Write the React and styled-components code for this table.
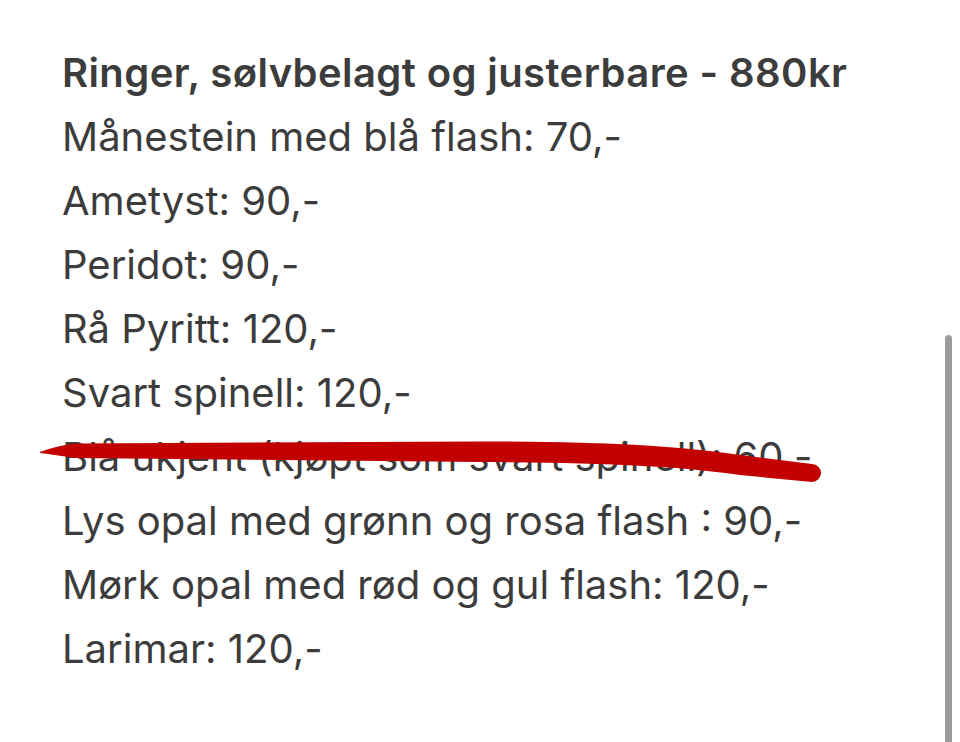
import React from 'react'
import styled, { createGlobalStyle } from 'styled-components'

const textColor = "#3c3c3c"
const strikeRed = "#c30000"

const Global = createGlobalStyle`
    html, body {
        margin: 0;
        padding: 0;
        background: #ffffff;
    }
    body {
        font-family: Inter, "Noto Sans", "Liberation Sans", sans-serif;
    }
`

const Page = styled.main`
    position: relative;
    width: 960px;
    height: 742px;
    overflow: hidden;
    background: #ffffff;
    padding: 41px 0 0 62px;
    box-sizing: border-box;
`

const List = styled.div`
    display: flex;
    flex-direction: column;
`

const Line = styled.div`
    position: relative;
    height: 64px;
    line-height: 64px;
    font-size: 40px;
    font-weight: ${p => (p.$bold ? 600 : 400)};
    color: ${textColor};
    letter-spacing: ${p => (p.$bold ? "0.4px" : "0px")};
    white-space: nowrap;
`

const Strike = styled.svg`
    position: absolute;
    left: -62px;
    top: 0;
    width: 960px;
    height: 64px;
    pointer-events: none;
`

const ScrollThumb = styled.div`
    position: absolute;
    right: 8px;
    top: 335px;
    bottom: -10px;
    width: 7px;
    border-radius: 4px;
    background: #9c9c9c;
`

const items = [
  "Månestein med blå flash: 70,-",
  "Ametyst: 90,-",
  "Peridot: 90,-",
  "Rå Pyritt: 120,-",
  "Svart spinell: 120,-",
  "Blå ukjent (kjøpt som svart spinell): 60,-",
  "Lys opal med grønn og rosa flash : 90,-",
  "Mørk opal med rød og gul flash: 120,-",
  "Larimar: 120,-",
]

// row 6 starts at y = 41 + 6*64 = 425
const strikePath =
  "M 40 27 Q 55 21 75 18.5 L 480 16.5 C 600 16.5 680 21 740 30 L 812 39 " +
  "A 9 9 0 0 1 812 57 L 740 50 C 680 41 600 37.5 480 37 L 75 33 Q 55 30 40 28 Z"

function StrikeMark() {
  return (
    <Strike viewBox="0 0 960 64">
      <path d={strikePath} fill={strikeRed} />
    </Strike>
  )
}

export default function App() {
  return (
    <>
      <Global />
      <Page>
        <List>
          <Line $bold>Ringer, sølvbelagt og justerbare - 880kr</Line>
          {items.map((t, i) => (
            <Line key={i}>
              {t}
              {i === 5 && <StrikeMark />}
            </Line>
          ))}
        </List>
        <ScrollThumb />
      </Page>
    </>
  )
}
